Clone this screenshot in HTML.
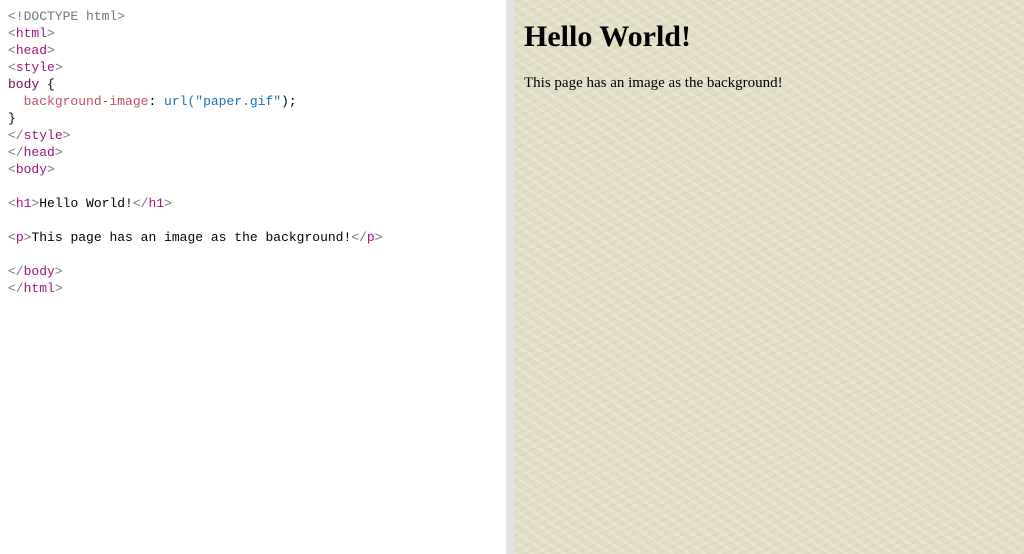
<!DOCTYPE html>
<html><head><style>
body{margin:0;width:1024px;height:554px;overflow:hidden;background:#fff;position:relative}
pre{position:absolute;left:8px;top:8px;margin:0;font:13px/17px "Liberation Mono",monospace;color:#000}
.g{color:#777}.t{color:#a0157a}.p{color:#c4505a}.b{color:#1f6fb0}.k{color:#7a0a55}
#div{position:absolute;left:506px;top:0;width:8px;height:554px;background:#e3e3e3}
#r{position:absolute;left:514px;top:0;width:510px;height:554px;background:#e3dfc6;
background-image:repeating-linear-gradient(35deg,rgba(255,255,255,.18) 0 3px,transparent 3px 9px),repeating-linear-gradient(-25deg,rgba(150,140,100,.08) 0 2px,transparent 2px 7px);
font-family:"Liberation Serif",serif}
h1{position:absolute;left:10px;top:20px;margin:0;font-size:30px;line-height:34px}
p{position:absolute;left:10px;top:75px;margin:0;font-size:15px}
</style></head><body>
<pre><span class="g">&lt;!DOCTYPE html&gt;</span>
<span class="g">&lt;</span><span class="t">html</span><span class="g">&gt;</span>
<span class="g">&lt;</span><span class="t">head</span><span class="g">&gt;</span>
<span class="g">&lt;</span><span class="t">style</span><span class="g">&gt;</span>
<span class="k">body</span> {
  <span class="p">background-image</span>: <span class="b">url(</span><span class="b">"paper.gif"</span>);
}
<span class="g">&lt;/</span><span class="t">style</span><span class="g">&gt;</span>
<span class="g">&lt;/</span><span class="t">head</span><span class="g">&gt;</span>
<span class="g">&lt;</span><span class="t">body</span><span class="g">&gt;</span>

<span class="g">&lt;</span><span class="t">h1</span><span class="g">&gt;</span>Hello World!<span class="g">&lt;/</span><span class="t">h1</span><span class="g">&gt;</span>

<span class="g">&lt;</span><span class="t">p</span><span class="g">&gt;</span>This page has an image as the background!<span class="g">&lt;/</span><span class="t">p</span><span class="g">&gt;</span>

<span class="g">&lt;/</span><span class="t">body</span><span class="g">&gt;</span>
<span class="g">&lt;/</span><span class="t">html</span><span class="g">&gt;</span></pre>
<div id="div"></div>
<div id="r"><h1>Hello World!</h1><p>This page has an image as the background!</p></div>
</body></html>
